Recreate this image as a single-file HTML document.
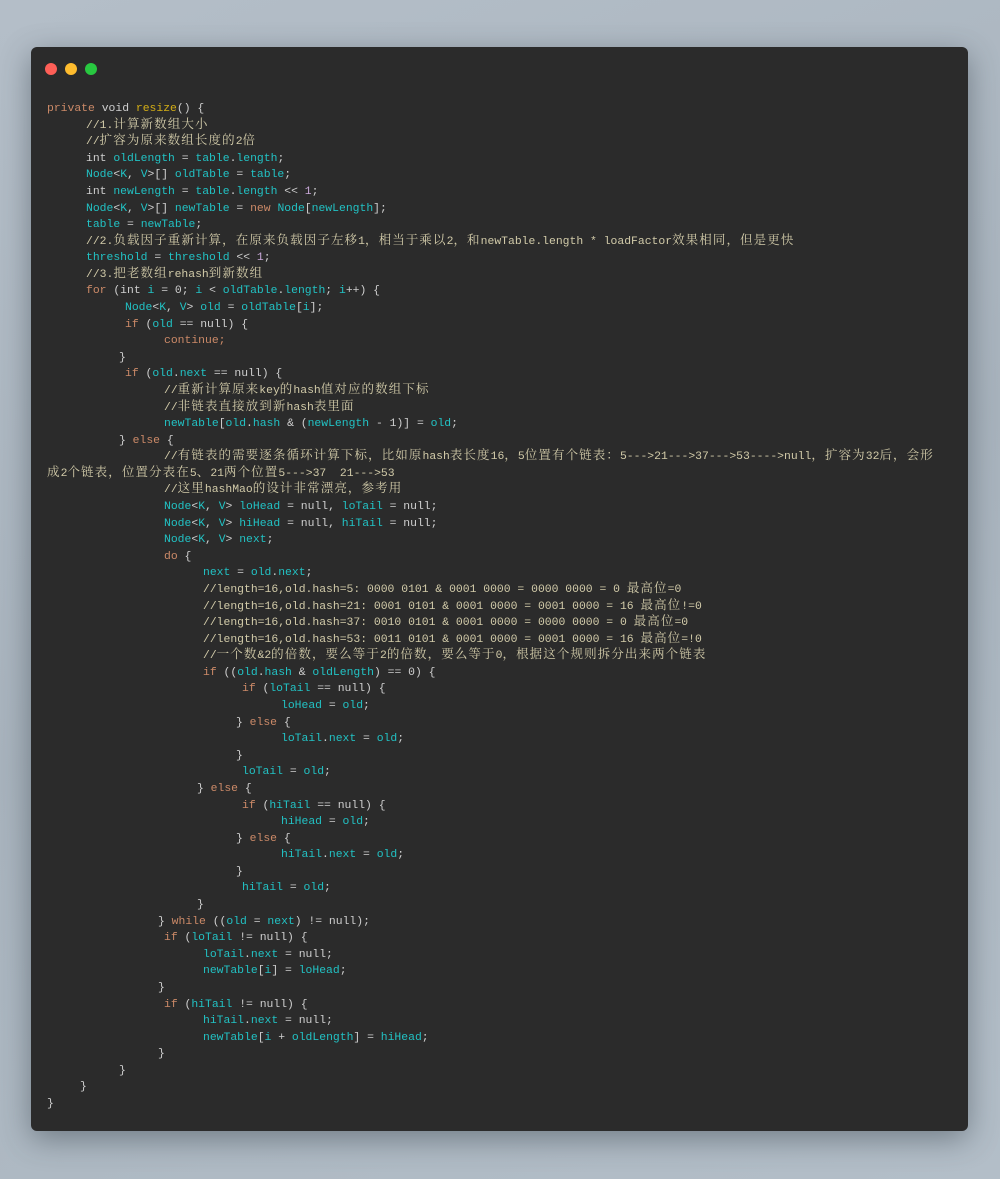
<!DOCTYPE html>
<html><head><meta charset="utf-8"><style>
html,body{margin:0;padding:0;}
body{width:1000px;height:1179px;background:linear-gradient(160deg,#b4bec8 0%,#a8b3bd 50%,#b3bec8 100%);position:relative;overflow:hidden;}
.win{position:absolute;left:31px;top:47px;width:937px;height:1084px;background:#2b2b2b;border-radius:6px;box-shadow:0 8px 30px rgba(40,50,60,.45);}
.dot{position:absolute;top:63px;width:12px;height:12px;border-radius:50%;}
.code{position:absolute;left:0;top:2px;font-family:"Liberation Mono","Noto Serif CJK SC",monospace;font-size:11.4px;color:#cfcfcf;white-space:pre;}
.l{position:absolute;height:16px;line-height:16px;}
.z{font-family:"Noto Serif CJK SC","Noto Sans CJK SC",serif;font-size:12.5px;letter-spacing:1.1px;line-height:0;}
.k{color:#cc8a68}.c{color:#22c2c4}.y{color:#d4ae16}.m{color:#d2cba9}.n{color:#c8a8d8}
</style></head><body>
<div class="win"></div>
<div class="dot" style="left:45px;background:#fe5f57"></div>
<div class="dot" style="left:65px;background:#febc2e"></div>
<div class="dot" style="left:85px;background:#28c840"></div>
<div class="code">
<div class="l" style="top:99px;left:47px"><span class="k">private</span> void <span class="y">resize</span>() {</div>
<div class="l m" style="top:115.6px;left:86px">//1.<span class="z">计算新数组大小</span></div>
<div class="l m" style="top:132.2px;left:86px">//<span class="z">扩容为原来数组长度的</span>2<span class="z">倍</span></div>
<div class="l" style="top:148.7px;left:86px">int <span class="c">oldLength</span> = <span class="c">table</span>.<span class="c">length</span>;</div>
<div class="l" style="top:165.3px;left:86px"><span class="c">Node</span>&lt;<span class="c">K</span>, <span class="c">V</span>&gt;[] <span class="c">oldTable</span> = <span class="c">table</span>;</div>
<div class="l" style="top:181.9px;left:86px">int <span class="c">newLength</span> = <span class="c">table</span>.<span class="c">length</span> &lt;&lt; <span class="n">1</span>;</div>
<div class="l" style="top:198.5px;left:86px"><span class="c">Node</span>&lt;<span class="c">K</span>, <span class="c">V</span>&gt;[] <span class="c">newTable</span> = <span class="k">new</span> <span class="c">Node</span>[<span class="c">newLength</span>];</div>
<div class="l" style="top:215.1px;left:86px"><span class="c">table</span> = <span class="c">newTable</span>;</div>
<div class="l m" style="top:231.7px;left:86px">//2.<span class="z">负载因子重新计算，在原来负载因子左移</span>1<span class="z">，相当于乘以</span>2<span class="z">，和</span>newTable.length * loadFactor<span class="z">效果相同，但是更快</span></div>
<div class="l" style="top:248.2px;left:86px"><span class="c">threshold</span> = <span class="c">threshold</span> &lt;&lt; <span class="n">1</span>;</div>
<div class="l m" style="top:264.8px;left:86px">//3.<span class="z">把老数组</span>rehash<span class="z">到新数组</span></div>
<div class="l" style="top:281.4px;left:86px"><span class="k">for</span> (int <span class="c">i</span> = 0; <span class="c">i</span> &lt; <span class="c">oldTable</span>.<span class="c">length</span>; <span class="c">i</span>++) {</div>
<div class="l" style="top:298px;left:125px"><span class="c">Node</span>&lt;<span class="c">K</span>, <span class="c">V</span>&gt; <span class="c">old</span> = <span class="c">oldTable</span>[<span class="c">i</span>];</div>
<div class="l" style="top:314.6px;left:125px"><span class="k">if</span> (<span class="c">old</span> == null) {</div>
<div class="l k" style="top:331.2px;left:164px">continue;</div>
<div class="l" style="top:347.7px;left:119px">}</div>
<div class="l" style="top:364.3px;left:125px"><span class="k">if</span> (<span class="c">old</span>.<span class="c">next</span> == null) {</div>
<div class="l m" style="top:380.9px;left:164px">//<span class="z">重新计算原来</span>key<span class="z">的</span>hash<span class="z">值对应的数组下标</span></div>
<div class="l m" style="top:397.5px;left:164px">//<span class="z">非链表直接放到新</span>hash<span class="z">表里面</span></div>
<div class="l" style="top:414.1px;left:164px"><span class="c">newTable</span>[<span class="c">old</span>.<span class="c">hash</span> &amp; (<span class="c">newLength</span> - 1)] = <span class="c">old</span>;</div>
<div class="l" style="top:430.7px;left:119px">} <span class="k">else</span> {</div>
<div class="l m" style="top:447.2px;left:164px">//<span class="z">有链表的需要逐条循环计算下标，比如原</span>hash<span class="z">表长度</span>16<span class="z">，</span>5<span class="z">位置有个链表：</span>5---&gt;21---&gt;37---&gt;53----&gt;null<span class="z">，扩容为</span>32<span class="z">后，会形</span></div>
<div class="l m" style="top:463.8px;left:47px"><span class="z">成</span>2<span class="z">个链表，位置分表在</span>5<span class="z">、</span>21<span class="z">两个位置</span>5---&gt;37  21---&gt;53</div>
<div class="l m" style="top:480.4px;left:164px">//<span class="z">这里</span>hashMao<span class="z">的设计非常漂亮，参考用</span></div>
<div class="l" style="top:497px;left:164px"><span class="c">Node</span>&lt;<span class="c">K</span>, <span class="c">V</span>&gt; <span class="c">loHead</span> = null, <span class="c">loTail</span> = null;</div>
<div class="l" style="top:513.6px;left:164px"><span class="c">Node</span>&lt;<span class="c">K</span>, <span class="c">V</span>&gt; <span class="c">hiHead</span> = null, <span class="c">hiTail</span> = null;</div>
<div class="l" style="top:530.2px;left:164px"><span class="c">Node</span>&lt;<span class="c">K</span>, <span class="c">V</span>&gt; <span class="c">next</span>;</div>
<div class="l" style="top:546.7px;left:164px"><span class="k">do</span> {</div>
<div class="l" style="top:563.3px;left:203px"><span class="c">next</span> = <span class="c">old</span>.<span class="c">next</span>;</div>
<div class="l m" style="top:579.9px;left:203px">//length=16,old.hash=5: 0000 0101 &amp; 0001 0000 = 0000 0000 = 0 <span class="z">最高位</span>=0</div>
<div class="l m" style="top:596.5px;left:203px">//length=16,old.hash=21: 0001 0101 &amp; 0001 0000 = 0001 0000 = 16 <span class="z">最高位</span>!=0</div>
<div class="l m" style="top:613.1px;left:203px">//length=16,old.hash=37: 0010 0101 &amp; 0001 0000 = 0000 0000 = 0 <span class="z">最高位</span>=0</div>
<div class="l m" style="top:629.7px;left:203px">//length=16,old.hash=53: 0011 0101 &amp; 0001 0000 = 0001 0000 = 16 <span class="z">最高位</span>=!0</div>
<div class="l m" style="top:646.2px;left:203px">//<span class="z">一个数</span>&amp;2<span class="z">的倍数，要么等于</span>2<span class="z">的倍数，要么等于</span>0<span class="z">，根据这个规则拆分出来两个链表</span></div>
<div class="l" style="top:662.8px;left:203px"><span class="k">if</span> ((<span class="c">old</span>.<span class="c">hash</span> &amp; <span class="c">oldLength</span>) == 0) {</div>
<div class="l" style="top:679.4px;left:242px"><span class="k">if</span> (<span class="c">loTail</span> == null) {</div>
<div class="l" style="top:696px;left:281px"><span class="c">loHead</span> = <span class="c">old</span>;</div>
<div class="l" style="top:712.6px;left:236px">} <span class="k">else</span> {</div>
<div class="l" style="top:729.2px;left:281px"><span class="c">loTail</span>.<span class="c">next</span> = <span class="c">old</span>;</div>
<div class="l" style="top:745.7px;left:236px">}</div>
<div class="l" style="top:762.3px;left:242px"><span class="c">loTail</span> = <span class="c">old</span>;</div>
<div class="l" style="top:778.9px;left:197px">} <span class="k">else</span> {</div>
<div class="l" style="top:795.5px;left:242px"><span class="k">if</span> (<span class="c">hiTail</span> == null) {</div>
<div class="l" style="top:812.1px;left:281px"><span class="c">hiHead</span> = <span class="c">old</span>;</div>
<div class="l" style="top:828.7px;left:236px">} <span class="k">else</span> {</div>
<div class="l" style="top:845.2px;left:281px"><span class="c">hiTail</span>.<span class="c">next</span> = <span class="c">old</span>;</div>
<div class="l" style="top:861.8px;left:236px">}</div>
<div class="l" style="top:878.4px;left:242px"><span class="c">hiTail</span> = <span class="c">old</span>;</div>
<div class="l" style="top:895px;left:197px">}</div>
<div class="l" style="top:911.6px;left:158px">} <span class="k">while</span> ((<span class="c">old</span> = <span class="c">next</span>) != null);</div>
<div class="l" style="top:928.2px;left:164px"><span class="k">if</span> (<span class="c">loTail</span> != null) {</div>
<div class="l" style="top:944.7px;left:203px"><span class="c">loTail</span>.<span class="c">next</span> = null;</div>
<div class="l" style="top:961.3px;left:203px"><span class="c">newTable</span>[<span class="c">i</span>] = <span class="c">loHead</span>;</div>
<div class="l" style="top:977.9px;left:158px">}</div>
<div class="l" style="top:994.5px;left:164px"><span class="k">if</span> (<span class="c">hiTail</span> != null) {</div>
<div class="l" style="top:1011.1px;left:203px"><span class="c">hiTail</span>.<span class="c">next</span> = null;</div>
<div class="l" style="top:1027.7px;left:203px"><span class="c">newTable</span>[<span class="c">i</span> + <span class="c">oldLength</span>] = <span class="c">hiHead</span>;</div>
<div class="l" style="top:1044.2px;left:158px">}</div>
<div class="l" style="top:1060.8px;left:119px">}</div>
<div class="l" style="top:1077.4px;left:80px">}</div>
<div class="l" style="top:1094px;left:47px">}</div>
</div>
</body></html>
